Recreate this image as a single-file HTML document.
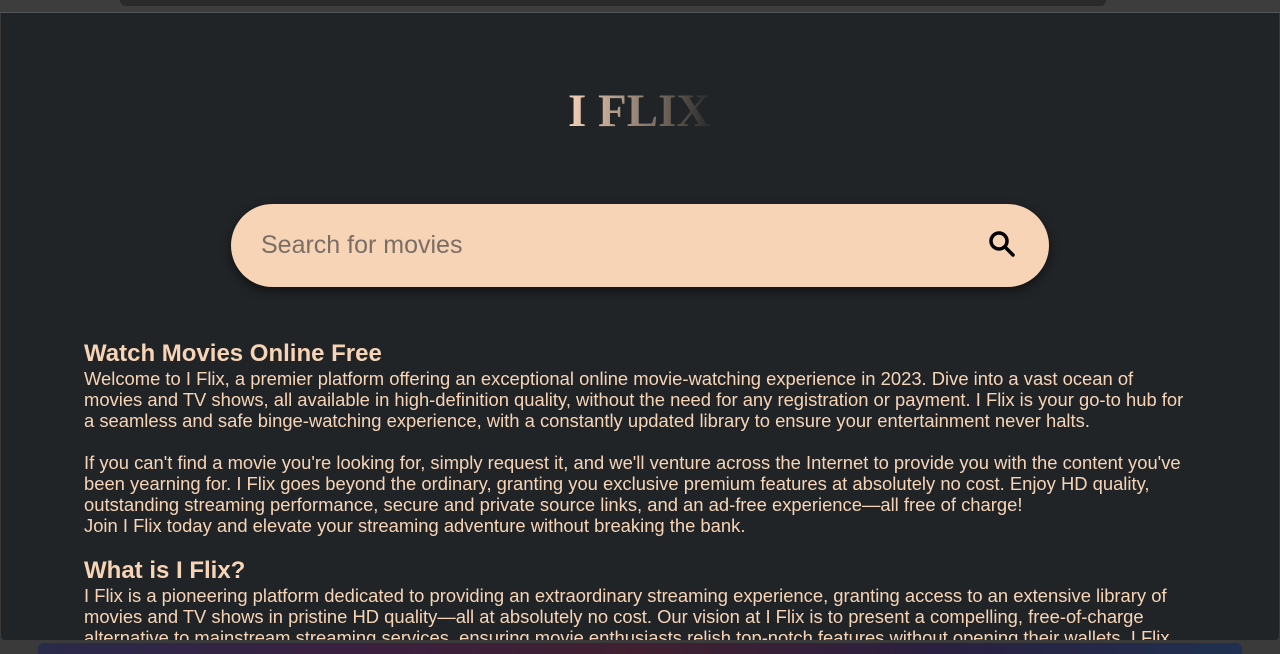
<!DOCTYPE html>
<html><head><meta charset="utf-8"><style>
body{margin:0;width:1280px;height:654px;overflow:hidden;background:#3a3a3a;font-family:"Liberation Sans",sans-serif}
.top{position:absolute;left:0;top:0;width:1280px;height:12px;background:#3d3d3d;border-bottom:1px solid #555}
.top div{position:absolute;left:120px;top:0;width:986px;height:6px;background:#2a2a2a;border-radius:0 0 8px 8px}
.main{position:absolute;left:1px;top:13px;width:1278px;height:627px;background:#212427;overflow:hidden;border-radius:0 0 4px 4px}
.logo{position:absolute;left:567px;top:72px;font-family:"Liberation Serif",serif;font-weight:bold;font-size:47px;letter-spacing:0px;background:linear-gradient(90deg,#f3d2b8,#8a7a6e 55%,#2a2a2a);-webkit-background-clip:text;color:transparent;line-height:52px}
.search{position:absolute;left:230px;top:191px;width:818px;height:83px;border-radius:42px;background:#f7d4b6;box-shadow:0 4px 10px rgba(0,0,0,.5)}
.search span{position:absolute;left:30px;top:27px;font-size:25px;color:#7a6e66}
.search svg{position:absolute}
.txt{position:absolute;left:83px;top:327px;width:1104px;color:#f7d4b6;font-size:18.4px;line-height:21px}
h2{margin:0;font-size:24px;line-height:28px}
p{margin:0 0 21px}
.dock{position:absolute;left:38px;top:643px;width:1204px;height:11px;background:linear-gradient(90deg,#2a2a4a,#3a2040,#402030,#2a2040,#203050);border-radius:6px 6px 0 0}
</style></head><body>
<div class="top"><div></div></div>
<div class="main">
<div class="logo">I FLIX</div>
<div class="search"><span>Search for movies</span>
<svg width="30" height="30" viewBox="0 0 30 30" style="left:756px;top:25px"><circle cx="12" cy="12" r="8" fill="none" stroke="#000" stroke-width="3.5"/><line x1="18" y1="18" x2="26" y2="26" stroke="#000" stroke-width="3.5" stroke-linecap="round"/></svg></div>
<div class="txt">
<h2>Watch Movies Online Free</h2>
<p>Welcome to I Flix, a premier platform offering an exceptional online movie-watching experience in 2023. Dive into a vast ocean of movies and TV shows, all available in high-definition quality, without the need for any registration or payment. I Flix is your go-to hub for a seamless and safe binge-watching experience, with a constantly updated library to ensure your entertainment never halts.</p>
<p>If you can't find a movie you're looking for, simply request it, and we'll venture across the Internet to provide you with the content you've been yearning for. I Flix goes beyond the ordinary, granting you exclusive premium features at absolutely no cost. Enjoy HD quality, outstanding streaming performance, secure and private source links, and an ad-free experience—all free of charge!<br>Join I Flix today and elevate your streaming adventure without breaking the bank.</p>
<h2>What is I Flix?</h2>
<p>I Flix is a pioneering platform dedicated to providing an extraordinary streaming experience, granting access to an extensive library of movies and TV shows in pristine HD quality—all at absolutely no cost. Our vision at I Flix is to present a compelling, free-of-charge alternative to mainstream streaming services, ensuring movie enthusiasts relish top-notch features without opening their wallets. I Flix</p>
</div>
</div>
<div class="dock"></div>
</body></html>
